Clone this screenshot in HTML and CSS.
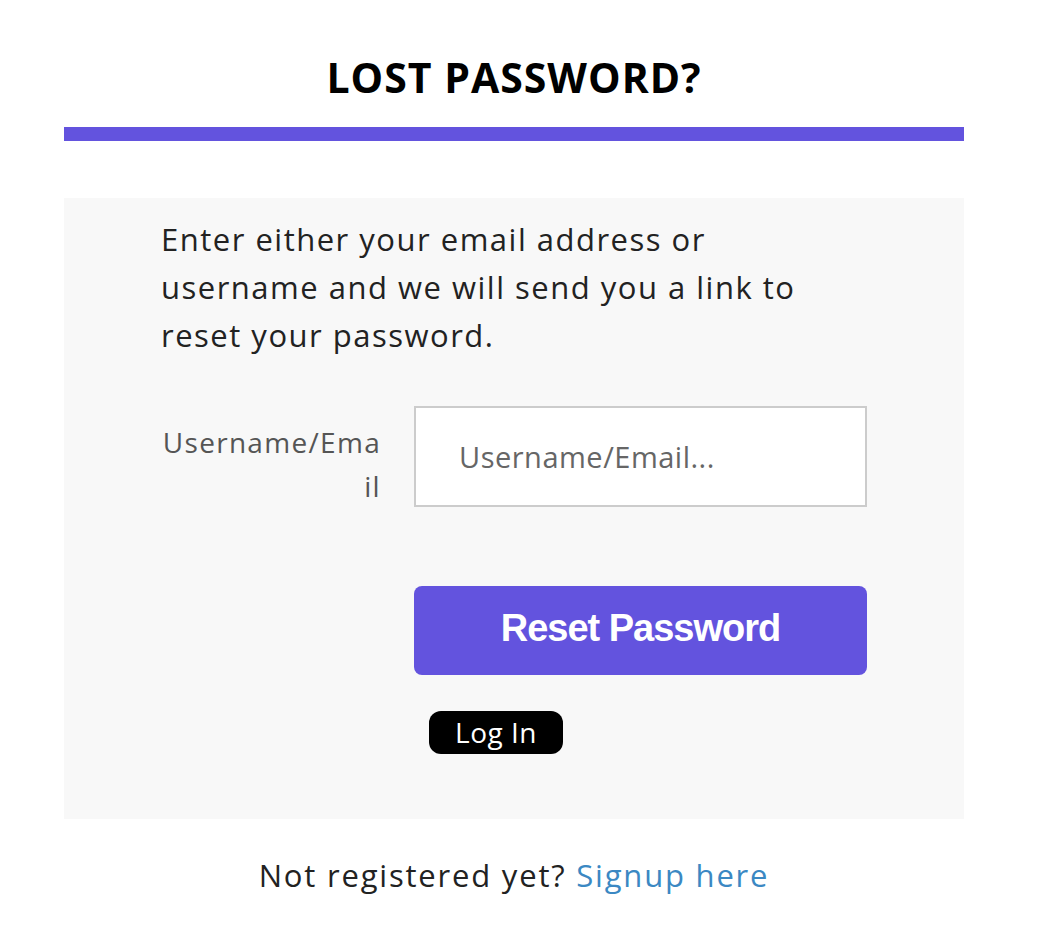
FILE: index.html
```html
<!DOCTYPE html>
<html lang="en">
<head>
    <meta charset="UTF-8">
    <meta name="viewport" content="width=device-width, initial-scale=1.0">
    <title>Lost Password</title>
    <link rel="stylesheet" href="styles.css">
</head>
<body>
    <div class="wrap">
        <h1 class="title">LOST PASSWORD?</h1>
        <div class="title-bar"></div>

        <div class="panel">
            <p class="intro">Enter either your email address or username and we will send you a link to reset your password.</p>

            <form class="lost-form" onsubmit="return false;">
                <label for="user_login" class="field-label">Username/Email</label>
                <input type="text" id="user_login" class="field-input" placeholder="Username/Email...">

                <div class="actions">
                    <button type="submit" class="btn-reset">Reset Password</button>
                    <a href="#" class="btn-login">Log In</a>
                </div>
            </form>
        </div>

        <p class="signup">Not registered yet? <a href="#">Signup here</a></p>
    </div>
</body>
</html>
```

FILE: styles.css
```css
body {
    margin: 0;
    background: #fff;
    font-family: "Open Sans", "DejaVu Sans", sans-serif;
    color: #222;
}
.wrap {
    width: 900px;
    margin-left: 64px;
    padding-top: 50px;
}
.title {
    margin: 0;
    text-align: center;
    font-weight: bold;
    font-size: 41px;
    letter-spacing: 1px;
    line-height: 54px;
    color: #000;
}
.title-bar {
    height: 14px;
    margin-top: 23px;
    background-color: #6353de;
}
.panel {
    margin-top: 57px;
    background-color: #f8f8f8;
    padding: 17px 0 65px 97px;
}
.intro {
    margin: 0;
    width: 670px;
    font-size: 31px;
    letter-spacing: 1.5px;
    line-height: 48px;
    color: #222;
}
.lost-form {
    display: grid;
    grid-template-columns: 220px 453px;
    column-gap: 33px;
    margin-top: 47px;
}
.field-label {
    text-align: right;
    word-break: break-all;
    font-size: 28px;
    letter-spacing: 1.3px;
    line-height: 44px;
    padding-top: 14px;
    color: #555;
}
.field-input {
    box-sizing: border-box;
    height: 101px;
    border: 2px solid #ccc;
    background: #fff;
    padding: 0 0 0 43px;
    font-family: inherit;
    font-size: 29px;
    letter-spacing: 0.5px;
    color: #333;
    outline: none;
}
.field-input::placeholder {
    color: #666;
}
.actions {
    grid-column: 2;
    margin-top: 78px;
}
.btn-reset {
    display: block;
    width: 453px;
    height: 89px;
    padding: 0 0 5px;
    border: none;
    border-radius: 8px;
    background-color: #6353de;
    color: #fff;
    font-family: "Liberation Sans", Arial, sans-serif;
    font-weight: bold;
    font-size: 38px;
    letter-spacing: -1px;
    cursor: pointer;
}
.btn-login {
    display: inline-block;
    margin: 36px 0 0 15px;
    width: 134px;
    height: 43px;
    line-height: 43px;
    text-align: center;
    border-radius: 12px;
    background: #000;
    color: #fff;
    text-decoration: none;
    font-size: 28px;
    letter-spacing: 0.5px;
}
.signup {
    margin: 32px 0 0;
    text-align: center;
    font-size: 31px;
    letter-spacing: 1.8px;
    line-height: 48px;
    color: #222;
}
.signup a {
    color: #3b88c3;
    text-decoration: none;
}
```
